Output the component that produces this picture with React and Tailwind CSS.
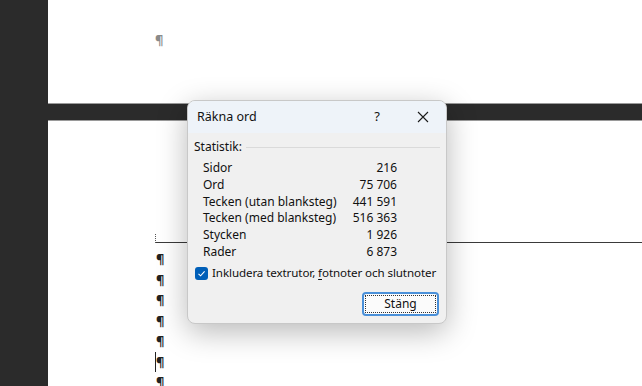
import React from 'react';

const stats = [
  { label: 'Sidor', value: '216' },
  { label: 'Ord', value: '75 706' },
  { label: 'Tecken (utan blanksteg)', value: '441 591' },
  { label: 'Tecken (med blanksteg)', value: '516 363' },
  { label: 'Stycken', value: '1 926' },
  { label: 'Rader', value: '6 873' },
];

const Pilcrow = ({ className }) => (
  <div className={`h-[20.5px] leading-[20.5px] text-[13px] font-bold ${className || ''}`}>¶</div>
);

const WordCountDialog = () => {
  return (
    <div className="absolute left-[187px] top-[100px] w-[260px] h-[224px] rounded-[8px] bg-[#f0f0f0] border border-[#c8c8c8] shadow-[0_8px_30px_rgba(0,0,0,0.28)] overflow-hidden flex flex-col text-[#111]">
      {/* Title bar */}
      <div className="h-[32px] bg-[#eef3f9] flex items-center pl-[9px] shrink-0">
        <span className="text-[12.5px]">Räkna ord</span>
        <span className="ml-auto w-[24px] text-center text-[13px] mr-[28px]">?</span>
        <svg width="12" height="12" viewBox="0 0 12 12" className="mr-[17px]">
          <path d="M1 1 L11 11 M11 1 L1 11" stroke="#1b1b1b" strokeWidth="1.1" />
        </svg>
      </div>

      {/* Body */}
      <div className="flex flex-col px-[6px] pt-[6px]">
        <div className="flex items-center h-[16px]">
          <span className="text-[12px]">Statistik:</span>
          <div className="flex-1 ml-[4px] border-t border-[#dadada]" />
        </div>

        <div className="flex flex-col pl-[9px] pt-[5px] w-[203px]">
          {stats.map((s) => (
            <div key={s.label} className="flex justify-between h-[16.7px] items-center text-[12px]">
              <span>{s.label}</span>
              <span>{s.value}</span>
            </div>
          ))}
        </div>

        <div className="flex items-center mt-[4px] h-[18px] whitespace-nowrap">
          <div className="w-[13px] h-[13px] rounded-[3px] bg-[#005fb8] flex items-center justify-center ml-[1px] shrink-0">
            <svg width="9" height="9" viewBox="0 0 9 9">
              <path d="M1.5 4.8 L3.6 6.8 L7.6 2.4" fill="none" stroke="white" strokeWidth="1.1" />
            </svg>
          </div>
          <span className="ml-[4px] text-[11.6px] tracking-[-0.1px]">
            Inkludera textrutor, <span className="underline underline-offset-2">f</span>otnoter och slutnoter
          </span>
        </div>

        <div className="flex justify-end mt-[10px] pr-[1px]">
          <button className="w-[77px] h-[24px] rounded-[4px] border-2 border-[#4a90d9] bg-[#fbfbfb] p-[1px]">
            <div className="w-full h-full border border-dotted border-[#333] flex items-center justify-center text-[12px]">
              Stäng
            </div>
          </button>
        </div>
      </div>
    </div>
  );
};

export default function App() {
  return (
    <div
      className="relative w-[642px] h-[386px] overflow-hidden bg-[#2b2b2b] flex flex-col pl-[48px]"
      style={{ fontFamily: '"Noto Sans", "Open Sans", sans-serif' }}
    >
      {/* upper page */}
      <div className="h-[104px] bg-white border-b border-[#9a9a9a] pl-[107px] pt-[32px] shrink-0">
        <div className="text-[13px] font-bold text-[#8a8a8a] leading-[16px]">¶</div>
      </div>

      {/* lower page */}
      <div className="flex-1 mt-[16px] bg-white border-t border-[#9a9a9a] flex flex-col pt-[112px]">
        <div className="flex items-end h-[10px]">
          <div className="ml-[107px] w-0 h-[9px] border-l border-dotted border-[#555]" />
          <div className="flex-1 border-b border-[#3a3a3a]" />
        </div>
        <div className="pl-[108px] pt-[6px] flex flex-col text-[#222]">
          <Pilcrow />
          <Pilcrow />
          <Pilcrow />
          <Pilcrow />
          <Pilcrow />
          <div className="flex items-center">
            <div className="w-0 h-[20px] border-l border-[#222] -ml-[1px]" />
            <Pilcrow />
          </div>
          <Pilcrow />
        </div>
      </div>

      <WordCountDialog />
    </div>
  );
}
